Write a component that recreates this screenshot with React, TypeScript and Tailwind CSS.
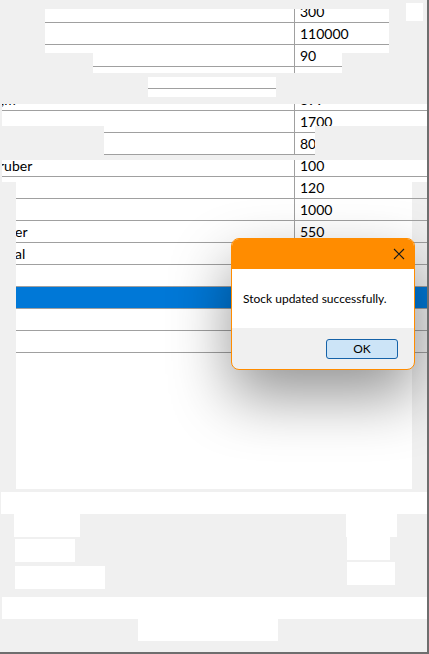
import React from "react";

// one row of the stock grid (name column | qty column)
interface GridRow {
  name: string;
  qty: string;
  nameCls?: string;
  selected?: boolean;
}

const rows: GridRow[] = [
  { name: "", qty: "300" },
  { name: "", qty: "110000" },
  { name: "", qty: "90" },
  { name: "", qty: "" },
  { name: ",m", qty: "899", nameCls: "ml-[1px]" },
  { name: "", qty: "1700" },
  { name: "", qty: "80" },
  { name: "ruber", qty: "100", nameCls: "-ml-[1px]" },
  { name: "", qty: "120" },
  { name: "", qty: "1000" },
  { name: "er", qty: "550", nameCls: "ml-[15px]" },
  { name: "al", qty: "40", nameCls: "ml-[15px]" },
  { name: "", qty: "" },
  { name: "", qty: "", selected: true },
  { name: "", qty: "" },
  { name: "", qty: "" },
];

// full grid laid out in page coordinates, rows start at y=1
function Grid({ bare = false }: { bare?: boolean }) {
  return (
    <div className={`w-[427px] ${bare ? "" : "bg-white"}`}>
      {rows.map((r, i) => (
        <div
          key={i}
          className={`flex h-[22px] border-b border-[#a0a0a0] ${
            r.selected ? "bg-[#0078d7] text-white" : ""
          }`}
        >
          <div className="w-[295px] shrink-0 border-r border-[#a0a0a0] flex items-center overflow-hidden whitespace-nowrap">
            <span className={r.nameCls}>{r.name}</span>
          </div>
          <div className="flex-1 flex items-center pl-[5px] whitespace-nowrap">
            {r.qty}
          </div>
        </div>
      ))}
    </div>
  );
}

function Dialog() {
  return (
    <div
      className="absolute left-[231px] top-[238px] w-[184px] h-[132px] rounded-[8px] border border-[#ff8c00] overflow-hidden bg-[#f0f0f0] shadow-[0_26px_60px_rgba(0,0,0,0.42)] flex flex-col"
      style={{ fontFamily: "Lato, 'Noto Sans', sans-serif" }}
    >
      <div className="h-[30px] bg-[#ff8c00] flex items-center justify-end pr-[9px]">
        <svg width="12" height="12" viewBox="0 0 12 12">
          <path d="M1 1 L11 11 M11 1 L1 11" stroke="#1a1a1a" strokeWidth="1.1" />
        </svg>
      </div>
      <div className="h-[59px] bg-white flex items-center pl-[11px] text-[12px] text-black">
        Stock updated successfully.
      </div>
      <div className="flex-1 flex items-center justify-end pr-[16px]">
        <button className="w-[72px] h-[20px] rounded-[3px] border border-[#1562a8] bg-[#cce4f7] text-[12px] text-black leading-none">
          OK
        </button>
      </div>
    </div>
  );
}

export default function App() {
  return (
    <div
      className="relative w-[429px] h-[654px] bg-[#f0f0f0] border-r-2 border-b-2 border-[#6e6e6e] overflow-hidden flex flex-col text-[14px] text-black"
      style={{ fontFamily: "Lato, 'Open Sans', sans-serif" }}
    >
      {/* top fragment + stray square */}
      <div className="flex items-start h-[53px] shrink-0">
        <div className="mt-[9px] ml-[45px] w-[344px] h-[44px] overflow-hidden bg-white">
          <div className="-mt-[8px] -ml-[45px]">
            <Grid />
          </div>
        </div>
        <div className="mt-[3px] ml-[17px] w-[17px] h-[18px] bg-white" />
      </div>

      <div className="ml-[93px] w-[249px] h-[20px] overflow-hidden bg-white shrink-0">
        <div className="-mt-[52px] -ml-[93px]">
          <Grid />
        </div>
      </div>

      <div className="mt-[4px] ml-[148px] w-[128px] h-[20px] overflow-hidden bg-white shrink-0">
        <div className="-mt-[76px] -ml-[148px]">
          <Grid />
        </div>
      </div>

      <div className="mt-[7px] ml-[2px] w-[425px] h-[22px] overflow-hidden bg-white shrink-0">
        <div className="-mt-[103px] -ml-[2px]">
          <Grid />
        </div>
      </div>

      <div className="ml-[104px] w-[211px] h-[29px] overflow-hidden bg-white shrink-0">
        <div className="-mt-[125px] -ml-[104px]">
          <Grid />
        </div>
      </div>

      <div className="mt-[5px] ml-[2px] w-[425px] h-[22px] overflow-hidden bg-white shrink-0">
        <div className="-mt-[159px] -ml-[2px]">
          <Grid />
        </div>
      </div>

      {/* main grid body */}
      <div className="flex h-[307px] shrink-0">
        <div className="ml-[16px] w-[396px] h-full overflow-hidden bg-white">
          <div className="-mt-[181px] -ml-[16px]">
            <Grid />
          </div>
        </div>
        <div className="w-[15px] h-full overflow-hidden">
          <div className="-mt-[181px] -ml-[412px]">
            <Grid bare />
          </div>
        </div>
      </div>

      {/* lower form fragments */}
      <div className="mt-[3px] ml-[1px] w-[426px] h-[22px] bg-white shrink-0" />
      <div className="flex h-[75px] shrink-0">
        <div className="w-[346px] flex flex-col">
          <div className="ml-[14px] w-[66px] h-[23px] bg-white" />
          <div className="mt-[2px] ml-[15px] w-[60px] h-[23px] bg-white" />
          <div className="mt-[4px] ml-[15px] w-[90px] h-[23px] bg-white" />
        </div>
        <div className="flex flex-col">
          <div className="w-[51px] h-[23px] bg-white" />
          <div className="ml-[1px] w-[43px] h-[23px] bg-white" />
          <div className="mt-[2px] ml-[1px] w-[48px] h-[23px] bg-white" />
        </div>
      </div>
      <div className="mt-[8px] ml-[2px] w-[425px] h-[22px] bg-white shrink-0" />
      <div className="ml-[138px] w-[140px] h-[22px] bg-white shrink-0" />

      <Dialog />
    </div>
  );
}
